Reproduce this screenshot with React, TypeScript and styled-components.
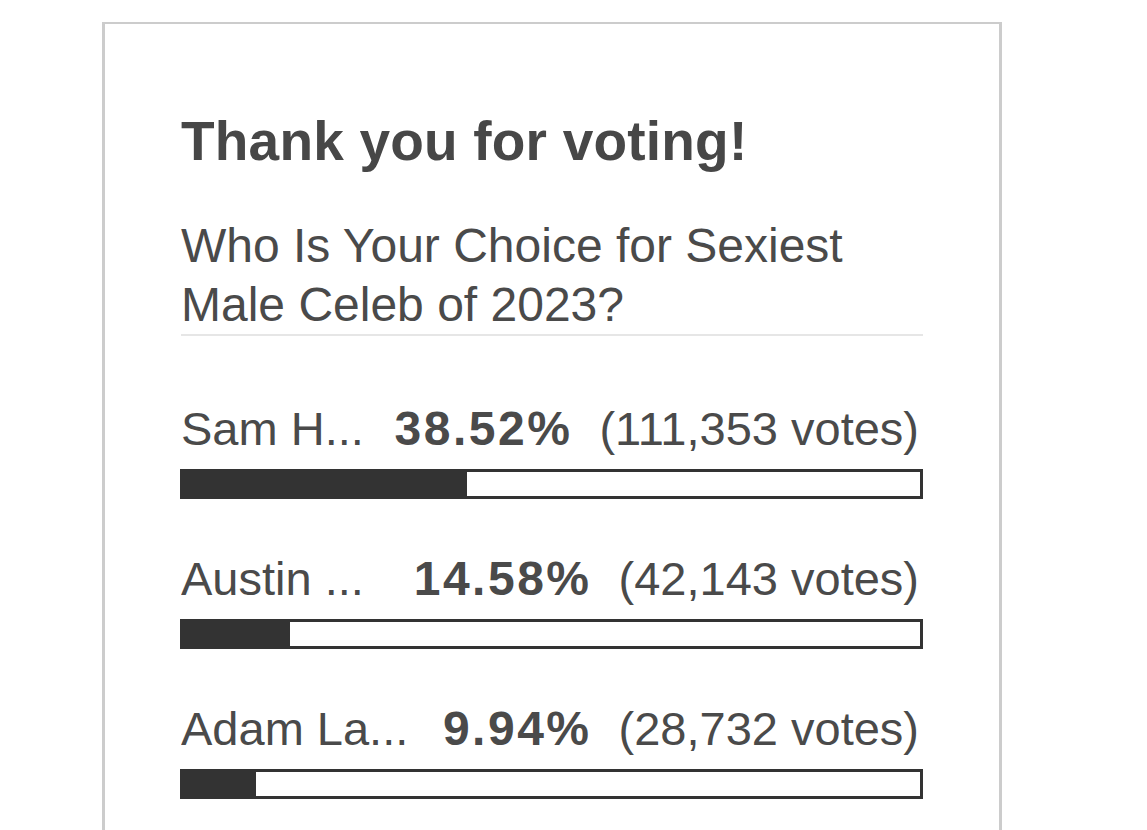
import styled, { createGlobalStyle } from "styled-components";

const results = [
  { name: "Sam H...", percent: 38.52, votes: "111,353" },
  { name: "Austin ...", percent: 14.58, votes: "42,143" },
  { name: "Adam La...", percent: 9.94, votes: "28,732" },
];

const GlobalStyle = createGlobalStyle`
  html, body {
    margin: 0;
    padding: 0;
    background: #fff;
    overflow: hidden;
  }
  body {
    font-family: "Liberation Sans", Arial, Helvetica, sans-serif;
    color: #4a4a4a;
  }
`;

export default function App() {
  return (
    <>
      <GlobalStyle />
      <Page>
        <Card>
          <Title>Thank you for voting!</Title>
          <Question>Who Is Your Choice for Sexiest Male Celeb of 2023?</Question>
          <Results>
            {results.map((r) => (
              <Result key={r.name}>
                <Row>
                  <Name>{r.name}</Name>
                  <Percent>{r.percent.toFixed(2)}%</Percent>
                  <Votes>({r.votes} votes)</Votes>
                </Row>
                <Bar>
                  <Fill style={{ width: `${r.percent}%` }} />
                </Bar>
              </Result>
            ))}
          </Results>
        </Card>
      </Page>
    </>
  );
}

const Page = styled.div`
  padding: 22px 0 0 102px;
  height: 830px;
  box-sizing: border-box;
`;

const Card = styled.div`
  width: 900px;
  min-height: 900px;
  box-sizing: border-box;
  border: 3px solid #cccccc;
  border-top-width: 2px;
  padding: 85px 76px 0 76px;
`;

const Title = styled.h1`
  margin: 0;
  font-size: 55px;
  line-height: 64px;
  font-weight: 700;
  letter-spacing: 0.2px;
  color: #474747;
`;

const Question = styled.p`
  margin: 43px 0 0;
  font-size: 48px;
  line-height: 59px;
  border-bottom: 2px solid #e6e6e6;
  color: #4a4a4a;
`;

const Results = styled.div`
  display: flex;
  flex-direction: column;
  gap: 51px;
  margin-top: 64px;
`;

const Result = styled.div`
  display: flex;
  flex-direction: column;
  gap: 12px;
`;

const Row = styled.div`
  display: flex;
  align-items: baseline;
  font-size: 47px;
  line-height: 57px;
  padding-right: 4px;
  white-space: nowrap;
`;

const Name = styled.span`
  flex: 1;
  min-width: 0;
  overflow: hidden;
`;

const Percent = styled.span`
  font-size: 48px;
  font-weight: 700;
  letter-spacing: 2.5px;
`;

const Votes = styled.span`
  margin-left: 27px;
`;

const Bar = styled.div`
  height: 30px;
  box-sizing: border-box;
  border: 3px solid #333333;
  margin-left: -1px;
  background: #fff;
`;

const Fill = styled.div`
  height: 100%;
  background: #333333;
`;
